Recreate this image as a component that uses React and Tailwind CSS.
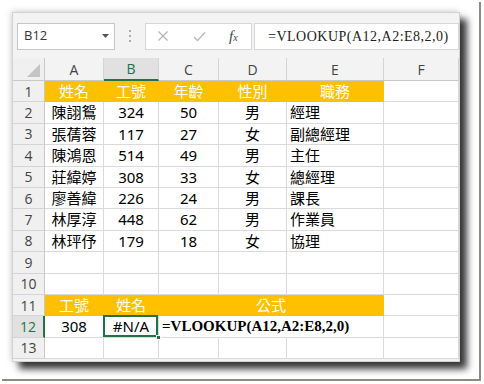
const rows = [
  ["陳詡鴛", "324", "50", "男", "經理"],
  ["張蒨蓉", "117", "27", "女", "副總經理"],
  ["陳鴻恩", "514", "49", "男", "主任"],
  ["莊緯婷", "308", "33", "女", "總經理"],
  ["廖善緯", "226", "24", "男", "課長"],
  ["林厚淳", "448", "62", "男", "作業員"],
  ["林玶伃", "179", "18", "女", "協理"],
];

const cols = ["A", "B", "C", "D", "E", "F"];

function RowHead({ n, active }) {
  return (
    <div
      className={`flex items-center justify-center border-b border-[#d4d4d4] text-[14px] font-['Open_Sans',sans-serif] ${
        active
          ? "border-r-2 border-r-[#217346] bg-[#e1e1e1] text-[#217346]"
          : "border-r border-r-[#c8c8c8] bg-[#f0f0f0] text-[#444]"
      }`}
    >
      {n}
    </div>
  );
}

function Cell({ children, className = "" }) {
  return <div className={`flex items-center border-r border-b border-[#dadada] bg-white ${className}`}>{children}</div>;
}

function Head({ children, className = "" }) {
  return (
    <div className={`flex items-center justify-center border-r border-b border-[#ffc000] bg-[#ffc000] text-white ${className}`}>
      {children}
    </div>
  );
}

export default function App() {
  return (
    <div className="h-[384px] w-[484px] overflow-hidden bg-white">
      <div className="h-[379px] w-[479px] bg-white pl-3 pt-3 shadow-[2px_2px_0_#8a8c80]">
        <div className="h-[350px] w-[448px] overflow-hidden border border-[#d2d2d2] bg-[#f3f3f3] shadow-[7px_7px_7px_rgba(0,0,0,0.78),-1px_-1px_6px_rgba(0,0,0,0.18)]">
          {/* formula bar */}
          <div className="flex h-[45px] items-center pl-[4px] pt-[1px]">
            <div className="flex h-[27px] w-[98px] items-center justify-between border border-[#c6c6c6] bg-white pl-[6px] pr-[5px] font-['Open_Sans',sans-serif] text-[13px] text-[#333]">
              <span>B12</span>
              <svg width="7" height="4" viewBox="0 0 7 4">
                <polygon points="0,0 7,0 3.5,4" fill="#555" />
              </svg>
            </div>
            <div className="flex w-[30px] flex-col items-center gap-[3px]">
              <span className="h-[2px] w-[2px] bg-[#aaa]" />
              <span className="h-[2px] w-[2px] bg-[#aaa]" />
              <span className="h-[2px] w-[2px] bg-[#aaa]" />
            </div>
            <div className="flex h-[27px] w-[107px] items-center border border-[#d6d6d6] bg-white">
              <svg className="ml-[11px]" width="12" height="12" viewBox="0 0 12 12">
                <path d="M1.5 1.5 L10.5 10.5 M10.5 1.5 L1.5 10.5" stroke="#b8b8b8" strokeWidth="1.4" fill="none" />
              </svg>
              <svg className="ml-[24px]" width="13" height="11" viewBox="0 0 13 11">
                <path d="M1 6 L4.5 9.5 L12 1.5" stroke="#b8b8b8" strokeWidth="1.4" fill="none" />
              </svg>
              <span className="ml-[23px] font-['Liberation_Serif',serif] text-[15px] italic text-[#444]">
                f<span className="text-[10px]">x</span>
              </span>
            </div>
            <div className="ml-[2px] flex h-[27px] flex-1 items-center border border-[#d6d6d6] bg-white pl-[13px] font-['Liberation_Serif',serif] text-[14px] tracking-[0.5px] text-[#222]">
              =VLOOKUP(A12,A2:E8,2,0)
            </div>
          </div>

          {/* sheet */}
          <div className="grid grid-cols-[32px_59px_55px_60px_68px_97px_75px] grid-rows-[23px_repeat(13,21.4px)] font-['Noto_Sans','Noto_Sans_CJK_TC',sans-serif] text-[15px] text-black">
            <div className="flex items-end justify-end border-r border-b border-[#c8c8c8] bg-[#f0f0f0] pb-[3px] pr-[4px]">
              <svg width="13" height="13" viewBox="0 0 13 13">
                <polygon points="13,0 13,13 0,13" fill="#c4c4c4" />
              </svg>
            </div>
            {cols.map((c) => (
              <div
                key={c}
                className={`flex items-center justify-center border-r border-r-[#d4d4d4] font-['Open_Sans',sans-serif] text-[14px] ${
                  c === "B"
                    ? "border-b-2 border-b-[#217346] bg-[#e1e1e1] text-[#217346]"
                    : "border-b border-b-[#c8c8c8] bg-[#f3f3f3] text-[#444]"
                }`}
              >
                {c}
              </div>
            ))}

            <RowHead n="1" />
            <Head>姓名</Head>
            <Head>工號</Head>
            <Head>年齡</Head>
            <Head>性別</Head>
            <Head>職務</Head>
            <Cell />

            {rows.map((r, i) => (
              <div key={i} className="contents">
                <RowHead n={String(i + 2)} />
                <Cell className="justify-center">{r[0]}</Cell>
                <Cell className="justify-center">{r[1]}</Cell>
                <Cell className="justify-center">{r[2]}</Cell>
                <Cell className="justify-center">{r[3]}</Cell>
                <Cell className="pl-[3px]">{r[4]}</Cell>
                <Cell />
              </div>
            ))}

            <RowHead n="9" />
            <Cell />
            <Cell />
            <Cell />
            <Cell />
            <Cell />
            <Cell />

            <RowHead n="10" />
            <Cell />
            <Cell />
            <Cell />
            <Cell />
            <Cell />
            <Cell />

            <RowHead n="11" />
            <Head>工號</Head>
            <Head>姓名</Head>
            <Head className="col-span-3">公式</Head>
            <Cell />

            <RowHead n="12" active />
            <Cell className="justify-center">308</Cell>
            <Cell className="relative justify-center">
              #N/A
              <div className="absolute -left-[1px] -top-[1px] bottom-0 right-0 border-2 border-[#217346]" />
              <div className="absolute -bottom-[3px] -right-[3px] h-[5px] w-[5px] border border-white bg-[#217346]" />
            </Cell>
            <Cell className="col-span-3 pl-[3px] font-['Liberation_Serif',serif] font-bold text-[15px] whitespace-nowrap">
              =VLOOKUP(A12,A2:E8,2,0)
            </Cell>
            <Cell />

            <RowHead n="13" />
            <Cell />
            <Cell />
            <Cell />
            <Cell />
            <Cell />
            <Cell />
          </div>
        </div>
      </div>
    </div>
  );
}
